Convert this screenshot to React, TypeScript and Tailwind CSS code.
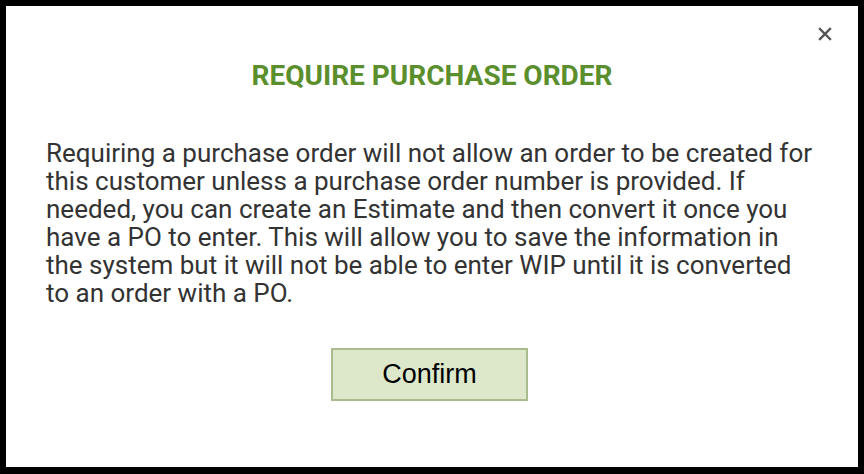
export default function App() {
  return (
    <div className="h-[474px] w-[864px] bg-black p-[6px] pb-[7px]">
      <div className="relative flex h-full w-full flex-col items-center bg-white px-[40px] pt-[55px]">
        <button className="absolute right-[26px] top-[21px] text-[#555]" aria-label="Close">
          <svg width="14" height="14" viewBox="0 0 14 14">
            <path d="M2 2L12 12M12 2L2 12" stroke="currentColor" strokeWidth="2.4" strokeLinecap="square" />
          </svg>
        </button>
        <h2 className="font-['Roboto',sans-serif] text-[28px] font-bold leading-[30px] text-[#5b8f2d]">
          REQUIRE PURCHASE ORDER
        </h2>
        <p className="mt-[48px] font-['Roboto',sans-serif] text-[26px] leading-[28px] text-[#333]">
          Requiring a purchase order will not allow an order to be created for this customer unless a
          purchase order number is provided. If needed, you can create an Estimate and then convert it once
          you have a PO to enter. This will allow you to save the information in the system but it will not
          be able to enter WIP until it is converted to an order with a PO.
        </p>
        <button className="mr-[5px] mt-[41px] h-[53px] w-[197px] border-2 border-[#aabb8c] bg-[#dde8cb] font-['Liberation_Sans',Arial,sans-serif] text-[27px] text-black">
          Confirm
        </button>
      </div>
    </div>
  );
}
